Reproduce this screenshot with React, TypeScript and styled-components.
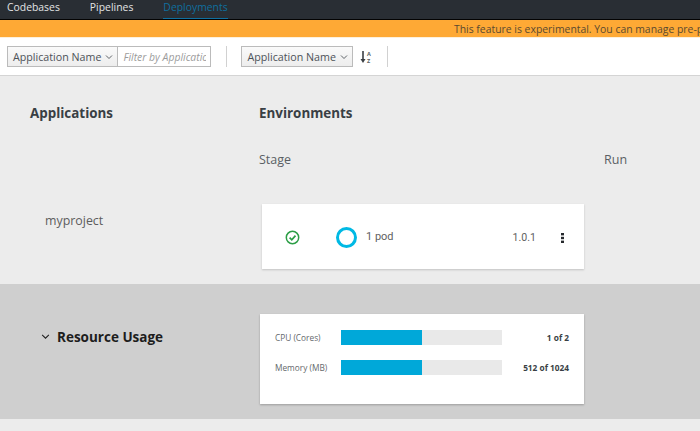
import React from "react";
import styled, { createGlobalStyle } from "styled-components";

const GlobalStyle = createGlobalStyle`
  html, body {
    margin: 0;
    padding: 0;
    width: 700px;
    height: 431px;
    overflow: hidden;
    background: #ececec;
    font-family: "Open Sans", "Liberation Sans", sans-serif;
  }
`;

const Page = styled.div`
  width: 700px;
  height: 431px;
  display: flex;
  flex-direction: column;
  overflow: hidden;
`;

const TopNav = styled.nav`
  flex: none;
  height: 19px;
  box-sizing: content-box;
  display: flex;
  gap: 30px;
  padding-left: 7px;
  background: #292e34;
  border-bottom: 1px solid #030303;
`;

const NavItem = styled.a<{ $active?: boolean }>`
  height: 19px;
  box-sizing: border-box;
  font-size: 10.4px;
  line-height: 15px;
  color: ${(p) => (p.$active ? "#0f6f9f" : "#e3e4e5")};
  border-bottom: ${(p) => (p.$active ? "1px solid #0f6f9f" : "none")};
`;

const Banner = styled.div`
  flex: none;
  height: 18px;
  background: #fea935;
  color: #5a4a30;
  font-size: 10.4px;
  line-height: 18px;
  padding-left: 454px;
  white-space: nowrap;
  overflow: hidden;
`;

const Toolbar = styled.div`
  flex: none;
  height: 37px;
  display: flex;
  align-items: center;
  padding-left: 7px;
  background: #fff;
  border-bottom: 1px solid #d4d4d4;
  border-top: 1px solid #fdf0dc;
  box-sizing: content-box;
  margin-top: -1px;
`;

const DropdownButton = styled.div`
  height: 21px;
  box-sizing: border-box;
  display: flex;
  align-items: center;
  gap: 4px;
  padding: 0 4px 0 5px;
  font-size: 10.7px;
  color: #4d5258;
  background: linear-gradient(#fafafa, #ededed);
  border: 1px solid #bbb;
  white-space: nowrap;
`;

const FilterInput = styled.input`
  width: 93px;
  height: 21px;
  box-sizing: border-box;
  margin: 0;
  padding: 0 4px 0 5px;
  font-family: inherit;
  font-size: 10.4px;
  font-style: italic;
  background: #fff;
  border: 1px solid #bbb;
  border-left: none;
  border-radius: 0;
  outline: none;

  &::placeholder {
    color: #9c9c9c;
    opacity: 1;
  }
`;

const Divider = styled.div<{ $gap: number }>`
  width: 1px;
  height: 21px;
  background: #d1d1d1;
  margin: 0 14px 0 ${(p) => p.$gap}px;
`;

const SortIcon = styled.svg`
  margin-left: 7px;
`;

const Section = styled.section<{ $dark?: boolean; $height: number }>`
  flex: none;
  height: ${(p) => p.$height}px;
  display: grid;
  grid-template-columns: 259px 1fr;
  background: ${(p) => (p.$dark ? "#cfcfcf" : "#ececec")};
`;

const LeftColumn = styled.div`
  padding-left: 30px;
`;

const ColumnTitle = styled.h2`
  margin: 0;
  padding-top: 28px;
  font-size: 13.4px;
  line-height: 19px;
  font-weight: 700;
  color: #393f44;
`;

const AppName = styled.div`
  margin: 89px 0 0 15px;
  font-size: 12.4px;
  line-height: 17px;
  color: #5d5d5d;
`;

const StageRow = styled.div`
  display: flex;
  margin-top: 28px;
  font-size: 12.5px;
  line-height: 17px;
  color: #5a5f64;
`;

const StageLabel = styled.div`
  width: 345px;
`;

const StageCard = styled.div`
  width: 322px;
  height: 65px;
  margin: 36px 0 0 3px;
  padding-top: 2px;
  box-sizing: border-box;
  display: flex;
  align-items: center;
  background: #fff;
  box-shadow: 0 1px 2px rgba(0, 0, 0, 0.18);
  font-family: Roboto, "Liberation Sans", sans-serif;
  font-size: 11px;
  color: #5f5f5f;
`;

const StatusIcon = styled.svg`
  margin-left: 23px;
`;

const PodRing = styled.div`
  width: 21px;
  height: 21px;
  box-sizing: border-box;
  margin-left: 36px;
  border: 3px solid #00b9e4;
  border-radius: 50%;
`;

const PodLabel = styled.span`
  margin: -3px 0 0 9px;
`;

const Version = styled.span`
  margin-left: auto;
  font-size: 10.6px;
`;

const Kebab = styled.svg`
  margin: 0 20px 0 25px;
`;

const ResourceTitle = styled.div`
  display: flex;
  align-items: center;
  gap: 7px;
  height: 19px;
  margin-top: 43px;
  padding-left: 41px;
  font-size: 13.5px;
  font-weight: 700;
  color: #1d1d1d;
`;

const ResourceCard = styled.div`
  width: 324px;
  height: 90px;
  margin: 30px 0 0 1px;
  box-sizing: border-box;
  padding: 16px 15px 0;
  display: flex;
  flex-direction: column;
  gap: 15px;
  background: #fff;
  box-shadow: 0 1px 2px rgba(0, 0, 0, 0.25);
`;

const UsageRow = styled.div`
  display: grid;
  grid-template-columns: 66px 161px 1fr;
  align-items: center;
  height: 15px;
  font-size: 8.3px;
  color: #64686c;
`;

const UsageTrack = styled.div`
  height: 15px;
  background: #e9e9e9;
`;

const UsageFill = styled.div`
  height: 100%;
  background: #00a8d9;
`;

const UsageValue = styled.div`
  text-align: right;
  font-weight: 700;
  color: #393f44;
`;

const Chevron = ({ size = 8 }: { size?: number }) => (
  <svg width={size} height={size} viewBox="0 0 8 8" fill="none" stroke="currentColor" strokeWidth="0.9">
    <path d="M1 2.5 L4 5.5 L7 2.5" />
  </svg>
);

const usage = [
  { label: "CPU (Cores)", value: "1 of 2", percent: 50 },
  { label: "Memory (MB)", value: "512 of 1024", percent: 50 },
];

export default function App() {
  return (
    <Page>
      <GlobalStyle />
      <TopNav>
        <NavItem>Codebases</NavItem>
        <NavItem>Pipelines</NavItem>
        <NavItem $active>Deployments</NavItem>
      </TopNav>
      <Banner>This feature is experimental. You can manage pre-production features in your profile settings.</Banner>
      <Toolbar>
        <DropdownButton>
          Application Name <Chevron />
        </DropdownButton>
        <FilterInput placeholder="Filter by Application Name" />
        <Divider $gap={15} />
        <DropdownButton>
          Application Name <Chevron />
        </DropdownButton>
        <SortIcon width="12" height="14" viewBox="0 0 12 14">
          <path d="M3 1 V11" stroke="#3b3f44" strokeWidth="1.6" fill="none" />
          <path d="M0.5 9 L3 13 L5.5 9 Z" fill="#3b3f44" />
          <text x="7" y="6" fontSize="5.5" fontWeight="700" fill="#5a5f64" fontFamily="Open Sans">A</text>
          <text x="7" y="13" fontSize="5.5" fontWeight="700" fill="#5a5f64" fontFamily="Open Sans">Z</text>
        </SortIcon>
        <Divider $gap={15} />
      </Toolbar>
      <Section $height={208}>
        <LeftColumn>
          <ColumnTitle>Applications</ColumnTitle>
          <AppName>myproject</AppName>
        </LeftColumn>
        <div>
          <ColumnTitle>Environments</ColumnTitle>
          <StageRow>
            <StageLabel>Stage</StageLabel>
            <div>Run</div>
          </StageRow>
          <StageCard>
            <StatusIcon width="15" height="15" viewBox="0 0 15 15" fill="none">
              <circle cx="7.5" cy="7.5" r="6.2" stroke="#2c9e46" strokeWidth="1.5" />
              <path d="M4.6 7.6 L6.8 9.8 L10.5 5.6" stroke="#2c9e46" strokeWidth="1.7" />
            </StatusIcon>
            <PodRing />
            <PodLabel>1 pod</PodLabel>
            <Version>1.0.1</Version>
            <Kebab width="3" height="10" viewBox="0 0 3 10" fill="#26292d">
              <rect x="0" y="0" width="3" height="2.4" />
              <rect x="0" y="3.8" width="3" height="2.4" />
              <rect x="0" y="7.6" width="3" height="2.4" />
            </Kebab>
          </StageCard>
        </div>
      </Section>
      <Section $dark $height={135}>
        <ResourceTitle>
          <Chevron size={9} />
          Resource Usage
        </ResourceTitle>
        <ResourceCard>
          {usage.map((row) => (
            <UsageRow key={row.label}>
              <span>{row.label}</span>
              <UsageTrack>
                <UsageFill style={{ width: `${row.percent}%` }} />
              </UsageTrack>
              <UsageValue>{row.value}</UsageValue>
            </UsageRow>
          ))}
        </ResourceCard>
      </Section>
    </Page>
  );
}
